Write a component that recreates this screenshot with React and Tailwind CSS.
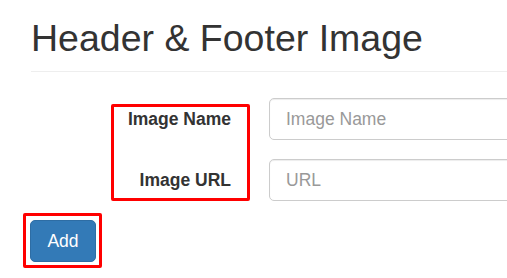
import React from "react";

const fields = [
  { label: "Image Name", placeholder: "Image Name" },
  { label: "Image URL", placeholder: "URL" },
];

const App = () => {
  return (
    <div className="relative w-[507px] h-[278px] overflow-hidden bg-white text-[#333] font-['Liberation_Sans',Arial,sans-serif]">
      <div className="pl-[31px]">
        {/* Page header */}
        <h1 className="mt-[18px] pb-[12px] border-b border-[#eee] text-[37.5px] leading-[1.1] font-normal">
          Header &amp; Footer Image
        </h1>

        {/* Form rows */}
        <div className="mt-[26px] flex flex-col gap-[19px]">
          {fields.map((f) => (
            <div key={f.label} className="flex items-center">
              <label className="w-[200px] shrink-0 text-right text-[17.5px] font-bold">
                {f.label}
              </label>
              <input
                type="text"
                placeholder={f.placeholder}
                className="ml-[38px] w-[300px] shrink-0 h-[42px] px-[16px] border border-[#ccc] rounded-[5px] text-[17.5px] placeholder:text-[#999] shadow-[inset_0_1px_1px_rgba(0,0,0,0.075)] outline-none"
              />
            </div>
          ))}
        </div>

        <button className="mt-[19px] -ml-px w-[66px] h-[42px] bg-[#337ab7] border border-[#2e6da4] rounded-[5px] text-white text-[17.5px]">
          Add
        </button>
      </div>

      {/* Annotation boxes */}
      <div className="absolute left-[111px] top-[104px] w-[139px] h-[97px] border-[3px] border-[#ff0000] rounded-[2px]" />
      <div className="absolute left-[23px] top-[213px] w-[79px] h-[55px] border-[3px] border-[#ff0000] rounded-[2px]" />
    </div>
  );
};

export default App;
